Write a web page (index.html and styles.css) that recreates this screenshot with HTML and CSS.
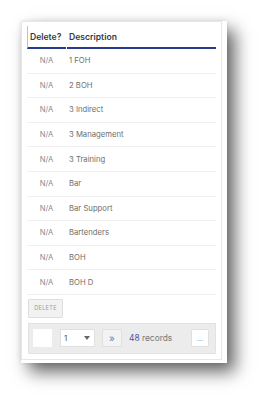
FILE: index.html
```html
<!DOCTYPE html>
<html>
<head>
<meta charset="utf-8">
<link rel="stylesheet" href="styles.css">
</head>
<body>
<div class="frame">
  <div class="panel">
    <div class="grid">
      <div class="hcell first">Delete?</div>
      <div class="hcell">Description</div>

      <div class="cell na">N/A</div><div class="cell">1 FOH</div>
      <div class="cell na">N/A</div><div class="cell">2 BOH</div>
      <div class="cell na">N/A</div><div class="cell">3 Indirect</div>
      <div class="cell na">N/A</div><div class="cell">3 Management</div>
      <div class="cell na">N/A</div><div class="cell">3 Training</div>
      <div class="cell na">N/A</div><div class="cell">Bar</div>
      <div class="cell na">N/A</div><div class="cell">Bar Support</div>
      <div class="cell na">N/A</div><div class="cell">Bartenders</div>
      <div class="cell na">N/A</div><div class="cell">BOH</div>
      <div class="cell na">N/A</div><div class="cell">BOH D</div>
    </div>
    <button class="delete">DELETE</button>
    <div class="pager">
      <div class="blank"></div>
      <div class="select"><span>1</span><span class="caret"></span></div>
      <div class="next">&raquo;</div>
      <div class="count"><span class="num">48</span> records</div>
      <div class="more">...</div>
    </div>
  </div>
</div>
</body>
</html>
```
FILE: styles.css
```css
html, body {
  margin: 0;
  padding: 0;
  background: #fff;
}
body {
  width: 269px;
  height: 405px;
  padding: 21px 0 0 21px;
  box-sizing: border-box;
  font-family: Inter, "Open Sans", sans-serif;
}
.frame {
  width: 206px;
  height: 342px;
  background: #fff;
  box-shadow: 8px 9px 16px rgba(0,0,0,0.6), 0 0 5px rgba(0,0,0,0.1);
}
.panel {
  width: 201px;
  height: 339px;
  box-sizing: border-box;
  border: 1px solid #e6e6e6;
  padding: 4px 5px 0 5px;
  display: flex;
  flex-direction: column;
  align-items: flex-start;
}
.grid {
  display: grid;
  grid-template-columns: 39px 149px;
  column-gap: 1px;
  width: 189px;
}
.hcell {
  height: 21px;
  border-bottom: 2px solid #2a3b8f;
  font-size: 8.6px;
  font-weight: 600;
  color: #3a3a3a;
  padding-left: 2px;
  display: flex;
  align-items: center;
}
.hcell.first {
  border-left: 1px solid #b9bfdc;
  padding-left: 2px;
}
.cell {
  height: 23.6px;
  border-bottom: 1px solid #efefef;
  font-size: 7.7px;
  color: #6e6e6e;
  padding-left: 2px;
  display: flex;
  align-items: center;
}
.cell.na {
  justify-content: center;
  padding-left: 0;
  color: #8a8a8a;
}
.delete {
  margin: 4px 0 0 1px;
  width: 35px;
  height: 19px;
  padding: 0;
  background: #f2f2f2;
  border: 1px solid #dedede;
  border-radius: 1px;
  font-family: Inter, sans-serif;
  font-size: 5.6px;
  letter-spacing: 0.3px;
  color: #9a9a9a;
}
.pager {
  margin: 5px 0 0 1px;
  width: 188px;
  height: 31px;
  box-sizing: border-box;
  background: #ececec;
  border: 1px solid #e2e2e2;
  display: flex;
  align-items: center;
  padding: 0 6px 0 4px;
}
.blank {
  width: 19px;
  height: 18px;
  background: #fff;
  border-radius: 1px;
}
.select {
  margin-left: 8px;
  width: 35px;
  height: 18px;
  box-sizing: border-box;
  background: #fff;
  border: 1px solid #e0e0e0;
  display: flex;
  align-items: center;
  justify-content: space-between;
  padding: 0 4px 0 3px;
  font-size: 8px;
  color: #555;
}
.caret {
  width: 0;
  height: 0;
  border-left: 3px solid transparent;
  border-right: 3px solid transparent;
  border-top: 4px solid #666;
}
.next {
  margin-left: 7px;
  width: 20px;
  height: 18px;
  box-sizing: border-box;
  background: #f3f3f3;
  border: 1px solid #e0e0e0;
  display: flex;
  align-items: center;
  justify-content: center;
  font-size: 10px;
  color: #7a80a8;
}
.count {
  margin-left: 7px;
  font-size: 8.4px;
  color: #777;
}
.count .num {
  color: #4a55a2;
}
.more {
  margin-left: auto;
  width: 18px;
  height: 18px;
  box-sizing: border-box;
  background: #fff;
  border: 1px solid #e0e0e0;
  border-radius: 2px;
  display: flex;
  align-items: center;
  justify-content: center;
  font-size: 7px;
  color: #999;
}
```
